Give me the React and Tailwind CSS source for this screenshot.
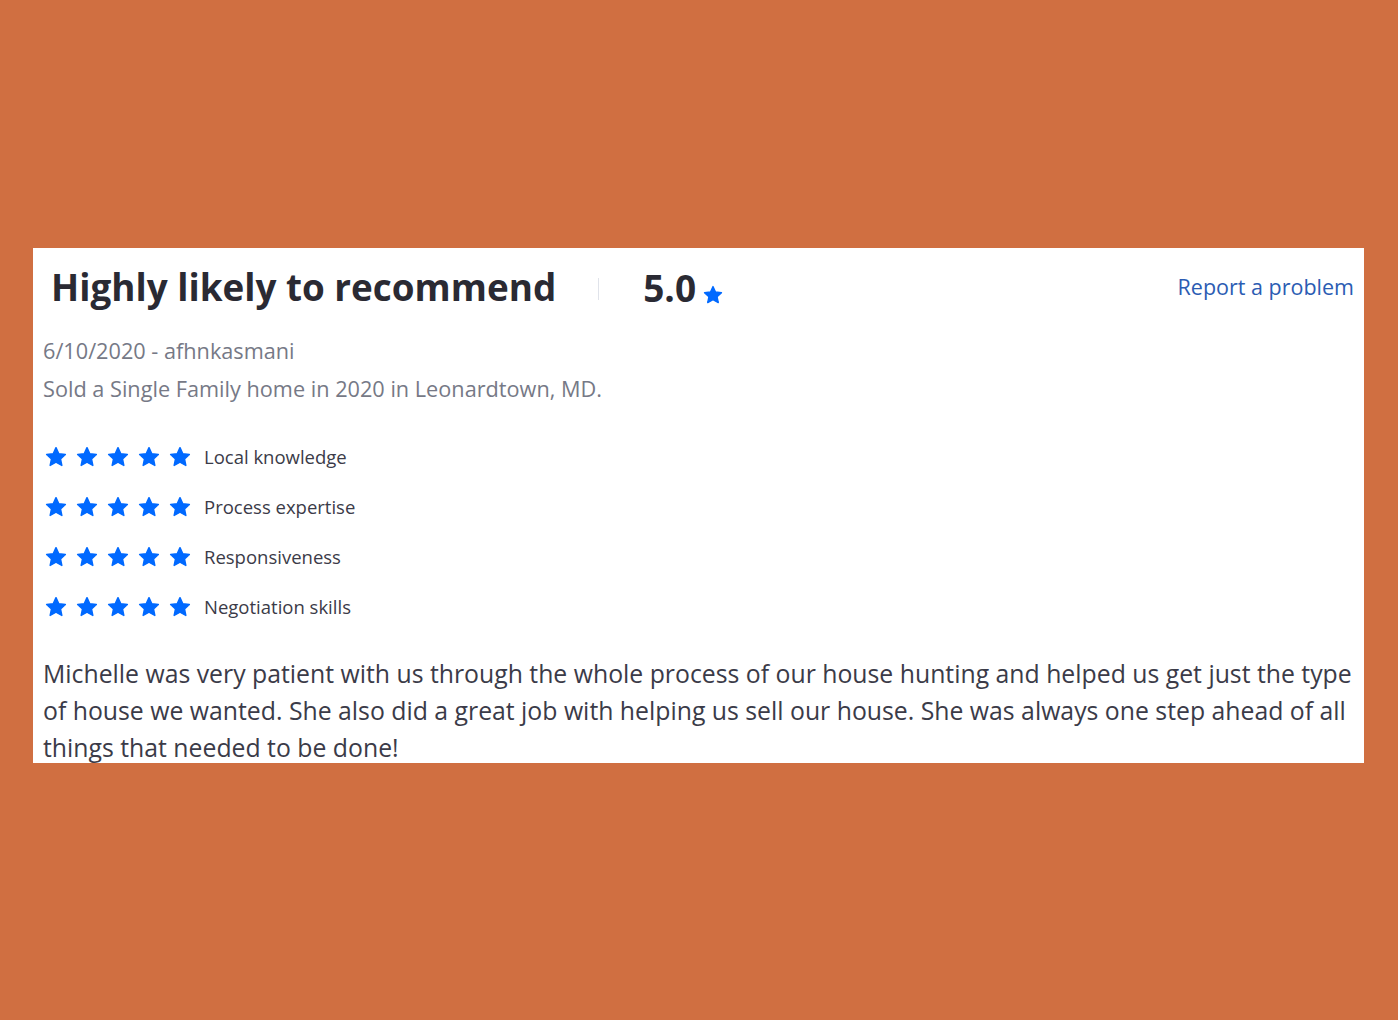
import React from "react";

const Star = ({ size = 22 }) => (
  <svg width={size} height={size} viewBox="0 0 24 24" aria-hidden="true">
    <path
      d="M12 1.8l3.05 6.6 7.15.8-5.3 4.9 1.45 7.1L12 17.6l-6.35 3.6 1.45-7.1-5.3-4.9 7.15-.8z"
      fill="#0069ff"
      stroke="#0069ff"
      strokeWidth="1.6"
      strokeLinejoin="round"
    />
  </svg>
);

const rows = ["Local knowledge", "Process expertise", "Responsiveness", "Negotiation skills"];

export default function App() {
  return (
    <div
      className="w-[1398px] h-[1020px] bg-[#d06f41] pt-[248px] pl-[33px]"
      style={{ fontFamily: '"Open Sans", sans-serif' }}
    >
      <div className="w-[1331px] h-[515px] bg-white overflow-hidden pl-[10px] pr-[8px]">
        <div className="flex items-center h-[78px] pr-[2px]">
          <h1 className="pl-[8px] text-[36.85px] font-bold text-[#2a2a33] leading-none">
            Highly likely to recommend
          </h1>
          <div className="w-px h-[22px] bg-[#e0e3ea] ml-[42px] mr-[44px] mt-[4px]"></div>
          <div className="flex items-end">
            <span className="text-[37px] font-bold text-[#2a2a33] leading-none">5.0</span>
            <span className="ml-[7px] mb-[1px]">
              <Star size={20} />
            </span>
          </div>
          <a className="ml-auto text-[21.5px] text-[#2b5cb3] leading-none">Report a problem</a>
        </div>
        <div className="mt-[6px] text-[21.7px] text-[#767986] leading-[38px]">
          <div>6/10/2020 - afhnkasmani</div>
          <div>Sold a Single Family home in 2020 in Leonardtown, MD.</div>
        </div>
        <div className="mt-[24px] flex flex-col">
          {rows.map((r) => (
            <div key={r} className="flex items-center h-[50px]">
              <div className="flex gap-[9px] pl-[2px]">
                {[0, 1, 2, 3, 4].map((i) => (
                  <Star key={i} size={22} />
                ))}
              </div>
              <span className="ml-[13px] text-[18.5px] text-[#3b3b48]">{r}</span>
            </div>
          ))}
        </div>
        <p className="mt-[23px] text-[24.8px] leading-[37px] text-[#3b3b48]">
          Michelle was very patient with us through the whole process of our house hunting and helped us get just the type of house we wanted. She also did a great job with helping us sell our house. She was always one step ahead of all things that needed to be done!
        </p>
      </div>
    </div>
  );
}
